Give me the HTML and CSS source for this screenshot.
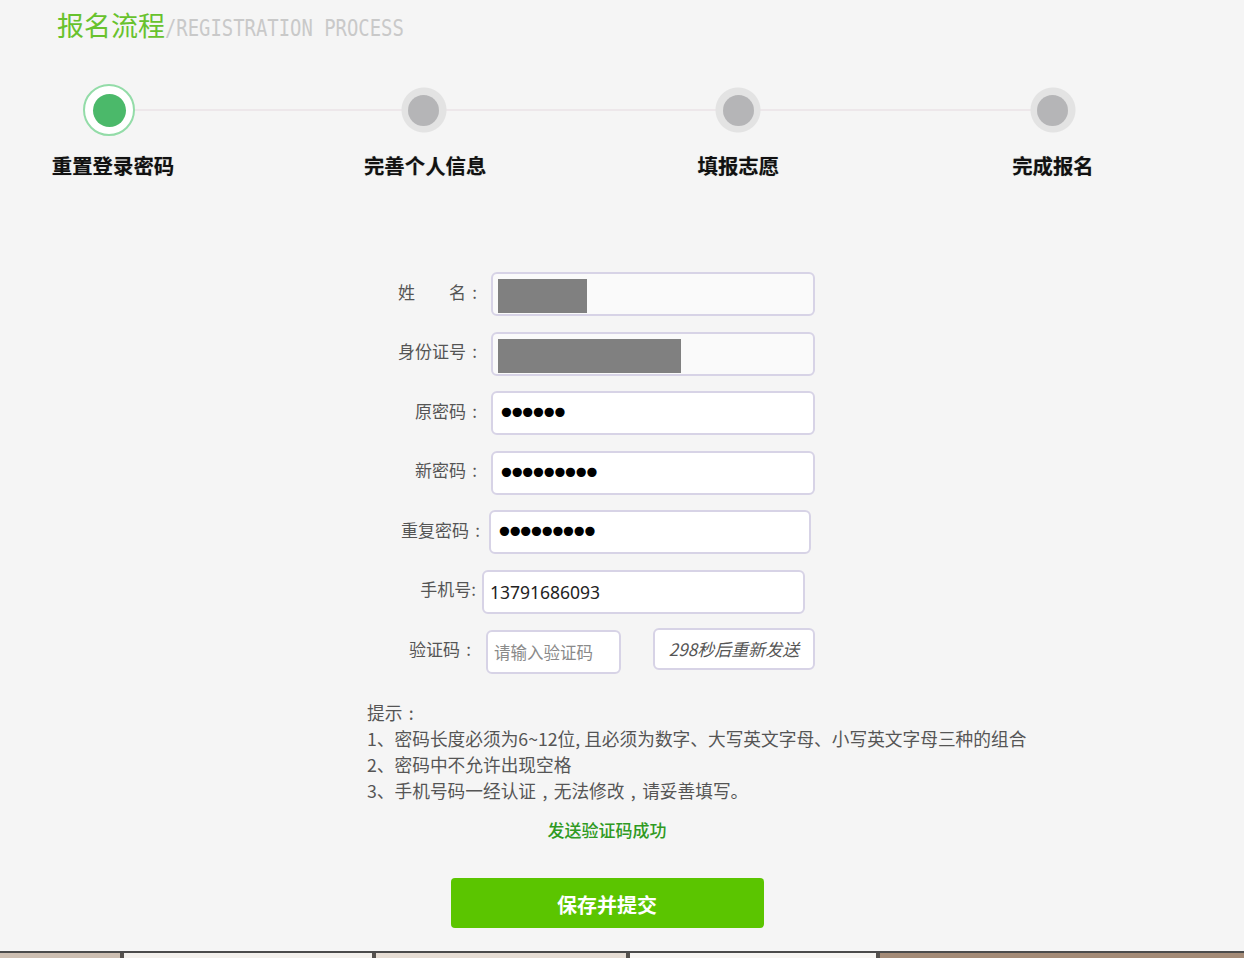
FILE: index.html
```html
<!DOCTYPE html>
<html lang="zh-CN">
<head>
<meta charset="utf-8">
<title>报名流程</title>
<link rel="stylesheet" href="styles.css">
</head>
<body>
<div class="page">
  <header class="title">
    <span class="title-cn">报名流程</span><span class="title-en">/REGISTRATION PROCESS</span>
  </header>

  <ol class="steps">
    <li class="step step-active"><span class="dot"><span class="dot-in"></span></span><span class="step-label">重置登录密码</span></li>
    <li class="step"><span class="dot"><span class="dot-in"></span></span><span class="step-label">完善个人信息</span></li>
    <li class="step"><span class="dot"><span class="dot-in"></span></span><span class="step-label">填报志愿</span></li>
    <li class="step"><span class="dot"><span class="dot-in"></span></span><span class="step-label">完成报名</span></li>
  </ol>

  <div class="content">
    <form class="form">
      <div class="row">
        <label class="label">姓　　名<span class="punc">:</span></label>
        <div class="field field-ro"><span class="mask mask-name"></span></div>
      </div>
      <div class="row">
        <label class="label">身份证号<span class="punc">:</span></label>
        <div class="field field-ro"><span class="mask mask-id"></span></div>
      </div>
      <div class="row">
        <label class="label">原密码<span class="punc">:</span></label>
        <input class="field pwd" type="password" value="abcdef" readonly>
      </div>
      <div class="row">
        <label class="label">新密码<span class="punc">:</span></label>
        <input class="field pwd" type="password" value="abcdefghi" readonly>
      </div>
      <div class="row row-repeat">
        <label class="label">重复密码<span class="punc">:</span></label>
        <input class="field pwd" type="password" value="abcdefghi" readonly>
      </div>
      <div class="row row-phone">
        <label class="label">手机号:</label>
        <input class="field text" type="text" value="13791686093" readonly>
      </div>
      <div class="row row-code">
        <label class="label">验证码<span class="punc">:</span></label>
        <input class="field code" type="text" placeholder="请输入验证码">
        <button type="button" class="resend">298秒后重新发送</button>
      </div>
    </form>

    <div class="tips">
      <p>提示<span class="punc">:</span></p>
      <p>1、密码长度必须为6~12位, 且必须为数字、大写英文字母、小写英文字母三种的组合</p>
      <p>2、密码中不允许出现空格</p>
      <p>3、手机号码一经认证<span class="punc">,</span>无法修改<span class="punc">,</span>请妥善填写。</p>
    </div>

    <p class="msg">发送验证码成功</p>
    <button type="button" class="submit">保存并提交</button>
  </div>

  <div class="taskbar">
    <span class="tab tab-a"></span>
    <span class="tab tab-b"></span>
    <span class="tab tab-c"></span>
    <span class="tab tab-d"></span>
    <span class="tab tab-e"></span>
  </div>
</div>
</body>
</html>
```

FILE: styles.css
```css
* { box-sizing: border-box; }
html, body { margin: 0; padding: 0; }
body {
  background: #f5f5f5;
  font-family: "Noto Sans CJK SC", "Noto Sans", sans-serif;
  color: #333;
}
.page {
  min-height: 958px;
  display: flex;
  flex-direction: column;
}

/* title */
.title {
  padding: 7px 0 0 57px;
  height: 43px;
  line-height: 36px;
  white-space: nowrap;
}
.title-cn {
  font-size: 27px;
  color: #68c22d;
}
.title-en {
  display: inline-block;
  font-family: "DejaVu Sans Mono", "Liberation Mono", monospace;
  font-size: 18.9px;
  color: #c9c9c9;
  transform: scaleY(1.2);
  transform-origin: 50% 70%;
}

/* steps */
.steps {
  list-style: none;
  margin: 41px 0 0 0;
  padding: 0 0 0 53px;
  width: 1109px;
  display: flex;
  justify-content: space-between;
  position: relative;
}
.steps::before {
  content: "";
  position: absolute;
  left: 109px;
  right: 56px;
  top: 25px;
  height: 2px;
  background: #ede7ea;
}
.step {
  width: 112px;
  display: flex;
  flex-direction: column;
  align-items: center;
  position: relative;
}
.dot {
  width: 52px;
  height: 52px;
  display: flex;
  align-items: center;
  justify-content: center;
  background: radial-gradient(circle, #e3e3e3 0 22px, transparent 23px);
}
.dot-in {
  width: 31px;
  height: 31px;
  border-radius: 50%;
  background: #b5b5b7;
}
.step-active .dot {
  background: #fff;
  border: 2px solid #93dca8;
  border-radius: 50%;
}
.step-active .dot-in {
  width: 33px;
  height: 33px;
  background: #4bb96a;
}
.step-label {
  margin-top: 16px;
  font-size: 20.4px;
  line-height: 26px;
  font-weight: 700;
  color: #111;
  white-space: nowrap;
  text-shadow: 0 0 1px rgba(0,0,0,0.35);
}
.step-active .step-label { margin-left: 8px; }
.step:nth-child(2) .step-label { margin-left: 3px; }

/* form */
.content {
  margin-left: 367px;
  width: 480px;
}
.form {
  margin-top: 94px;
  display: flex;
  flex-direction: column;
  gap: 15.6px;
}
.row {
  display: flex;
  align-items: center;
  height: 44px;
}
.label {
  flex: none;
  width: 116px;
  margin-right: 8px;
  padding-bottom: 6px;
  text-align: right;
  font-size: 17px;
  color: #555;
  white-space: nowrap;
}
.punc {
  display: inline-block;
  width: 1em;
  text-align: center;
}
.field {
  flex: none;
  width: 324px;
  height: 44px;
  border: 2px solid #d7d3e6;
  border-radius: 6px;
  background: #fff;
  padding: 0 6px;
  margin: 0;
  font-family: "Noto Sans", "Noto Sans CJK SC", sans-serif;
  font-size: 17.5px;
  color: #222;
  outline: none;
}
.field-ro {
  background: #fafafa;
  padding: 5px;
}
.mask {
  display: block;
  height: 34px;
  background: #808080;
}
.mask-name { width: 89px; }
.mask-id { width: 183px; }
.pwd {
  font-family: "DejaVu Sans", sans-serif;
  font-size: 32px;
  letter-spacing: -8.2px;
  padding-left: 4px;
  color: #000;
}
.row-repeat .label { width: 119px; margin-right: 3px; }
.row-repeat .field { width: 322px; }
.row-phone .label { width: 109px; margin-right: 6px; }
.row-phone .field { width: 323px; }
.row-code { align-items: flex-start; }
.row-code .label { width: 110px; margin-right: 9px; line-height: 44px; padding-bottom: 0; margin-top: -3px; }
.code {
  width: 135px;
  font-family: "Noto Sans CJK SC", sans-serif;
  font-size: 16.5px;
}
.code::placeholder { color: #8a8a8a; }
.resend {
  flex: none;
  margin: -2px 0 0 32px;
  width: 162px;
  height: 42px;
  border: 2px solid #d7d3e6;
  border-radius: 6px;
  background: #fff;
  font-family: "Noto Sans CJK SC", sans-serif;
  font-size: 17px;
  font-style: italic;
  color: #555;
  padding: 0;
}

/* tips */
.tips {
  margin-top: 25px;
  font-size: 17.7px;
  line-height: 26px;
  color: #555;
  white-space: nowrap;
}
.tips p { margin: 0; }
.msg {
  margin: 14px 0 0 0;
  text-align: center;
  font-size: 17px;
  line-height: 26px;
  color: #2f9a22;
  font-weight: 500;
}
.submit {
  display: block;
  margin: 35px auto 0;
  width: 313px;
  height: 50px;
  border: 0;
  border-radius: 4px;
  background: #5bc500;
  color: #fff;
  font-family: "Noto Sans CJK SC", sans-serif;
  font-size: 20px;
  font-weight: 700;
  padding: 3px 0 0 0;
}

/* bottom strip */
.taskbar {
  margin-top: auto;
  height: 7px;
  border-top: 2px solid #4b4b4b;
  display: flex;
  background: #3a3a3a;
}
.tab { height: 5px; border-right: 4px solid #55514d; }
.tab-a { width: 124px; background: #cdbfb2; }
.tab-b { width: 252px; background: #f3f0ec; }
.tab-c { width: 254px; background: #e6ddd4; }
.tab-d { width: 250px; background: #f7f5f2; }
.tab-e { flex: 1; background: #a48b77; border-right: 0; }
```
